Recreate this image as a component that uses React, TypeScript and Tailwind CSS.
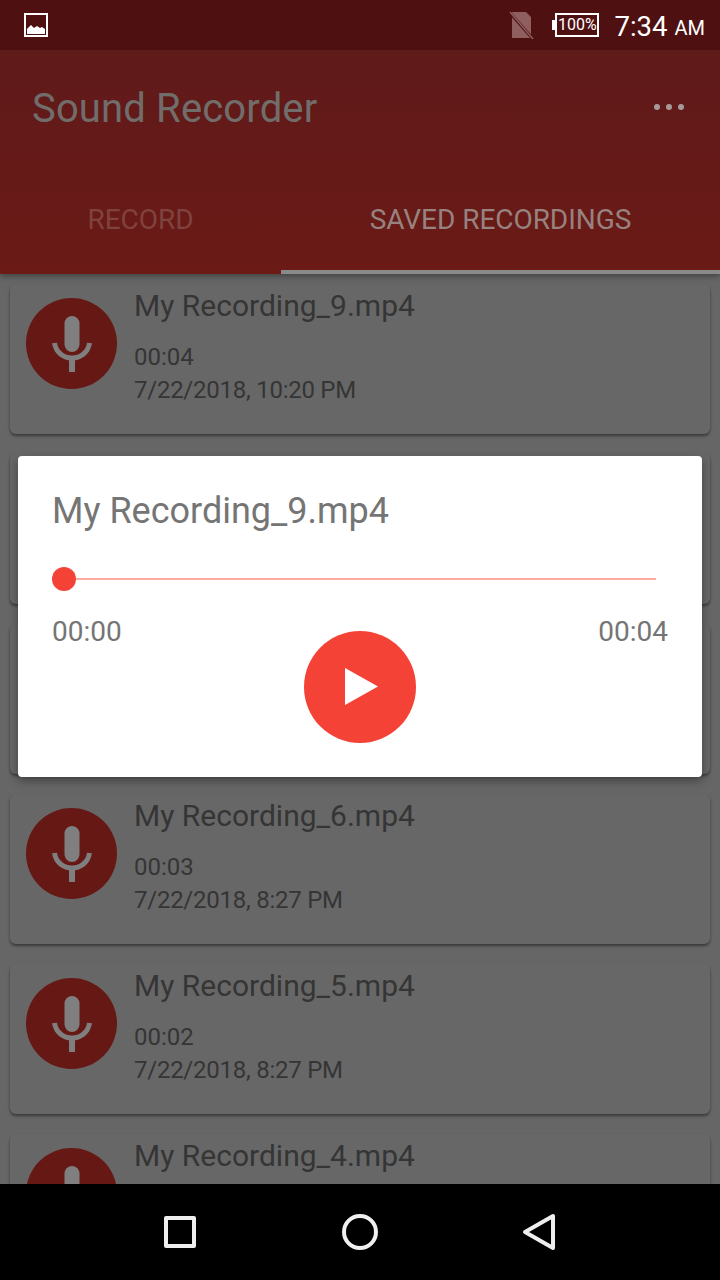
import React from 'react';

// the list behind the dialog is dimmed, so its colours are written as they appear
const recordings = [
  { name: 'My Recording_9.mp4', length: '00:04', date: '7/22/2018, 10:20 PM' },
  { name: 'My Recording_8.mp4', length: '00:04', date: '7/22/2018, 10:18 PM' },
  { name: 'My Recording_7.mp4', length: '00:03', date: '7/22/2018, 8:28 PM' },
  { name: 'My Recording_6.mp4', length: '00:03', date: '7/22/2018, 8:27 PM' },
  { name: 'My Recording_5.mp4', length: '00:02', date: '7/22/2018, 8:27 PM' },
  { name: 'My Recording_4.mp4', length: '00:02', date: '7/22/2018, 8:26 PM' },
];

const MicIcon = () => (
  <svg viewBox="0 0 40 56" width="40" height="56" fill="none" className="mt-[1px]">
    <rect x="12.5" y="0" width="15" height="36" rx="7.5" fill="#807f7f" />
    <path d="M2.5 27C4 37 12 42 20 42S36 37 37.5 27" stroke="#807f7f" strokeWidth="5" />
    <path d="M20 41v15" stroke="#807f7f" strokeWidth="6" />
  </svg>
);

const StatusBar = () => (
  <div className="flex h-[50px] shrink-0 items-center bg-[#4f1011] pl-[24px] pr-[15px] text-white">
    <svg viewBox="0 0 24 24" width="24" height="24" fill="none">
      <rect x="1" y="1" width="22" height="22" stroke="#fff" strokeWidth="2" />
      <path d="M3 21v-5l4-4 3 3 3-2 3 2 2-1 3 2v5z" fill="#fff" />
    </svg>
    <div className="ml-auto flex items-center">
      <svg viewBox="0 0 26 28" width="26" height="28" className="mr-[17px]">
        <path d="M3 1h14l5 5v21H3z" fill="#8f5f60" />
        <path d="M2 3l22 25" stroke="#4f1011" strokeWidth="3" />
        <path d="M1 1l23 27" stroke="#8f5f60" strokeWidth="1.5" />
      </svg>
      <div className="h-[10px] w-[3px] bg-white" />
      <div className="mr-[15px] flex h-[24px] w-[44px] items-center justify-center border-2 border-white text-[16px] leading-none">
        100%
      </div>
      <span className="mt-[3px] text-[27.5px] leading-none">7:34</span>
      <span className="ml-[7px] mt-[6px] text-[20px] leading-none">AM</span>
    </div>
  </div>
);

const RecordingCard = ({ name, length, date }: (typeof recordings)[number]) => (
  <div className="flex h-[150px] shrink-0 rounded-[6px] bg-[#676767] pl-[16px] shadow-[0_2px_3px_rgba(0,0,0,0.45)]">
    <div className="mt-[14px] flex h-[91px] w-[91px] shrink-0 items-center justify-center rounded-full bg-[#661815]">
      <MicIcon />
    </div>
    <div className="ml-[17px] text-[#353535]">
      <p className="mt-[4px] text-[30px] leading-[36px]">{name}</p>
      <p className="mt-[17px] text-[24px] leading-[33px]">{length}</p>
      <p className="text-[24px] leading-[33px] tracking-[-0.25px]">{date}</p>
    </div>
  </div>
);

const PlayerDialog = () => (
  <div className="h-[321px] w-[684px] rounded-[4px] bg-white px-[34px] shadow-[0_4px_10px_rgba(0,0,0,0.35)]">
    <p className="mt-[33px] text-[36px] leading-[44px] text-[#757575]">My Recording_9.mp4</p>
    <div className="mt-[34px] flex items-center">
      <div className="h-[24px] w-[24px] shrink-0 rounded-full bg-[#f44336]" />
      <div className="h-[2px] w-[580px] bg-[#fcab9c]" />
    </div>
    <div className="mt-[25px] flex h-[33px] items-center justify-between text-[28px] text-[#757575]">
      <span>00:00</span>
      <span>00:04</span>
    </div>
    <div className="-mt-[18px] flex justify-center">
      <div className="flex h-[112px] w-[112px] items-center justify-center rounded-full bg-[#f44336]">
        <svg viewBox="0 0 33 37" width="33" height="37" fill="#fff" className="ml-[2px]">
          <path d="M0 0l33 18.5L0 37z" />
        </svg>
      </div>
    </div>
  </div>
);

const NavBar = () => (
  <div className="flex h-[96px] shrink-0 items-center bg-black">
    <div className="ml-[164px] h-[32px] w-[32px] rounded-[2px] border-[4px] border-[#efefef]" />
    <div className="ml-[146px] h-[36px] w-[36px] rounded-full border-[4px] border-[#efefef]" />
    <svg viewBox="0 0 34 38" width="34" height="38" fill="none" className="ml-[144px]">
      <path d="M31 3v32L3 19z" stroke="#efefef" strokeWidth="4" strokeLinejoin="round" />
    </svg>
  </div>
);

export default function App() {
  return (
    <div className="flex h-[1280px] w-[720px] flex-col overflow-hidden font-['Roboto',sans-serif]">
      <StatusBar />
      <div className="relative flex min-h-0 flex-1 flex-col">
        <div className="relative z-[1] h-[224px] shrink-0 bg-gradient-to-b from-[#5f1a1a] to-[#6b1a16] shadow-[0_3px_5px_rgba(0,0,0,0.3)]">
          <div className="flex h-[114px] items-center justify-between pl-[32px] pr-[36px]">
            <h1 className="mt-[4px] text-[40px] font-normal tracking-[0.15px] text-[#716d6b]">Sound Recorder</h1>
            <div className="flex gap-[6px]">
              <span className="h-[6px] w-[6px] rounded-full bg-[#a59a99]" />
              <span className="h-[6px] w-[6px] rounded-full bg-[#a59a99]" />
              <span className="h-[6px] w-[6px] rounded-full bg-[#a59a99]" />
            </div>
          </div>
          <div className="flex h-[110px] flex-col">
            <div className="flex h-[106px] text-[28px] tracking-[-0.05px]">
              <div className="flex w-[281px] justify-center pt-[35px] text-[#80423e]">RECORD</div>
              <div className="flex flex-1 justify-center pt-[35px] text-[#97827f]">SAVED RECORDINGS</div>
            </div>
            <div className="ml-[281px] h-[4px] bg-[#8a8a8a]" />
          </div>
        </div>
        <div className="flex min-h-0 flex-1 flex-col gap-[20px] overflow-hidden bg-[#666666] px-[10px] pt-[10px]">
          {recordings.map(r => (
            <RecordingCard key={r.name} {...r} />
          ))}
        </div>
        <div className="absolute inset-0 z-[2] flex items-center justify-center pb-[2px]">
          <PlayerDialog />
        </div>
      </div>
      <NavBar />
    </div>
  );
}
